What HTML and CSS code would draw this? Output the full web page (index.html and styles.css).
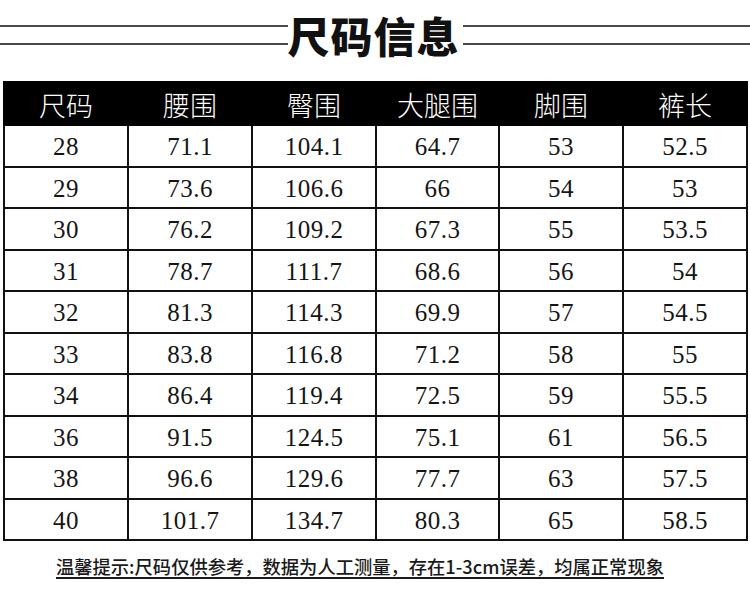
FILE: index.html
```html
<!DOCTYPE html>
<html lang="zh-CN">
<head>
<meta charset="utf-8">
<title>尺码信息</title>
<link rel="stylesheet" href="styles.css">
</head>
<body>
<div class="page">
  <header class="title-row">
    <div class="rule"></div>
    <h1 class="title">尺码信息</h1>
    <div class="rule"></div>
  </header>
  <table class="size-table">
    <colgroup>
      <col class="c1"><col class="c2"><col class="c3"><col class="c4"><col class="c5"><col class="c6">
    </colgroup>
    <thead>
      <tr><th>尺码</th><th>腰围</th><th>臀围</th><th>大腿围</th><th>脚围</th><th>裤长</th></tr>
    </thead>
    <tbody>
      <tr><td>28</td><td>71.1</td><td>104.1</td><td>64.7</td><td>53</td><td>52.5</td></tr>
      <tr><td>29</td><td>73.6</td><td>106.6</td><td>66</td><td>54</td><td>53</td></tr>
      <tr><td>30</td><td>76.2</td><td>109.2</td><td>67.3</td><td>55</td><td>53.5</td></tr>
      <tr><td>31</td><td>78.7</td><td>111.7</td><td>68.6</td><td>56</td><td>54</td></tr>
      <tr><td>32</td><td>81.3</td><td>114.3</td><td>69.9</td><td>57</td><td>54.5</td></tr>
      <tr><td>33</td><td>83.8</td><td>116.8</td><td>71.2</td><td>58</td><td>55</td></tr>
      <tr><td>34</td><td>86.4</td><td>119.4</td><td>72.5</td><td>59</td><td>55.5</td></tr>
      <tr><td>36</td><td>91.5</td><td>124.5</td><td>75.1</td><td>61</td><td>56.5</td></tr>
      <tr><td>38</td><td>96.6</td><td>129.6</td><td>77.7</td><td>63</td><td>57.5</td></tr>
      <tr><td>40</td><td>101.7</td><td>134.7</td><td>80.3</td><td>65</td><td>58.5</td></tr>
    </tbody>
  </table>
  <p class="note">温馨提示:尺码仅供参考，数据为人工测量，存在1-3cm误差，均属正常现象</p>
</div>
</body>
</html>
```
FILE: styles.css
```css
html, body {
  margin: 0;
  padding: 0;
  background: #ffffff;
}
.page {
  width: 750px;
  height: 596px;
  overflow: hidden;
  font-family: "Noto Sans CJK SC", sans-serif;
}
.title-row {
  display: flex;
  align-items: center;
  height: 70px;
}
.rule {
  flex: 1;
  height: 16px;
  border-top: 2px solid #4a4a4a;
  border-bottom: 2px solid #4a4a4a;
}
.title {
  margin: 0 3px 0 0;
  font-family: "Noto Sans CJK SC", sans-serif;
  font-weight: 900;
  font-size: 42px;
  line-height: 70px;
  color: #111;
  letter-spacing: 1px;
}
.size-table {
  margin: 11px 0 0 3px;
  width: 743px;
  table-layout: fixed;
  border-collapse: collapse;
  border: 2px solid #111;
}
.c1 { width: 124px; }
.c2 { width: 124px; }
.c3 { width: 124px; }
.c4 { width: 123px; }
.c5 { width: 124px; }
.c6 { width: 124px; }
.size-table th {
  background: #000;
  color: #fff;
  height: 38px;
  padding: 3px 0 0;
  font-family: "Noto Sans CJK SC", sans-serif;
  font-weight: 300;
  font-size: 27px;
  line-height: 38px;
  border: 2px solid #000;
}
.size-table td {
  height: 36.5px;
  padding: 3px 0 0;
  text-align: center;
  font-family: "Liberation Serif", "Noto Sans CJK SC", serif;
  font-size: 25px;
  line-height: 36px;
  letter-spacing: 0.5px;
  color: #151515;
  border: 2px solid #111;
}
.note {
  margin: 12px 0 0 56px;
  font-family: "Noto Sans CJK SC", sans-serif;
  font-weight: 500;
  font-size: 18.3px;
  line-height: 26px;
  color: #1a1a1a;
  text-decoration: underline;
  text-decoration-thickness: 1.5px;
  text-underline-offset: 3px;
  white-space: nowrap;
}
```
